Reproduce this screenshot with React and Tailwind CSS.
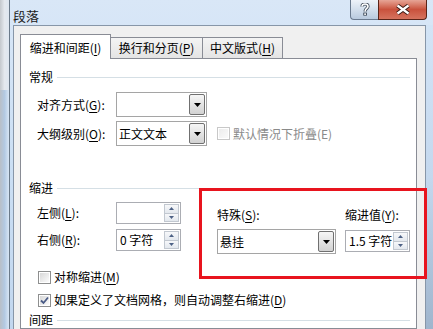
import React from "react";

const U = ({ children }) => (
  <span className="underline underline-offset-[2px] decoration-1">{children}</span>
);

const Arrow = () => (
  <svg width="7" height="4" viewBox="0 0 7 4">
    <path d="M0 0H7L3.5 4Z" fill="#000" />
  </svg>
);

const Combo = ({ text, w }) => (
  <div className={`flex h-[25px] ${w} items-stretch border border-[#a5a5a5] bg-white p-px`}>
    <div className="flex flex-1 items-center pl-[1px] text-black">{text}</div>
    <div className="flex w-[16px] items-center justify-center rounded-[2px] border border-[#707070] bg-gradient-to-b from-[#f6f6f6] to-[#d2d2d2]">
      <Arrow />
    </div>
  </div>
);

const Spin = ({ text }) => (
  <div className="flex h-[22px] w-[65px] items-stretch border border-[#abadb3] bg-white p-px">
    <div className="flex flex-1 items-center pl-[2px] text-black whitespace-nowrap overflow-hidden">{text}</div>
    <div className="flex w-[15px] flex-col">
      <div className="flex flex-1 items-center justify-center border border-[#c2c8d0] bg-gradient-to-b from-[#f7f8fa] to-[#e3e8ee]">
        <svg width="5" height="3" viewBox="0 0 5 3">
          <path d="M0 3H5L2.5 0Z" fill="#4d6185" />
        </svg>
      </div>
      <div className="flex flex-1 items-center justify-center border border-t-0 border-[#c2c8d0] bg-gradient-to-b from-[#f7f8fa] to-[#e3e8ee]">
        <svg width="5" height="3" viewBox="0 0 5 3">
          <path d="M0 0H5L2.5 3Z" fill="#4d6185" />
        </svg>
      </div>
    </div>
  </div>
);

const Check = ({ checked, disabled }) => (
  <div
    className={`h-[13px] w-[13px] shrink-0 border p-px bg-white ${
      disabled ? "border-[#c8c8c8]" : "border-[#8e8f8f]"
    }`}
  >
    <div
      className={`flex h-full w-full items-center justify-center ${
        disabled
          ? "bg-gradient-to-br from-[#ececec] to-[#fafafa]"
          : "bg-gradient-to-br from-[#d8d8d8] to-[#fbfbfb]"
      }`}
    >
      {checked && (
        <svg width="9" height="9" viewBox="0 0 9 9">
          <path d="M1 4.5L3.5 7L8 1.5" fill="none" stroke="#4a5b86" strokeWidth="1.8" />
        </svg>
      )}
    </div>
  </div>
);

const Header = ({ children, className = "" }) => (
  <div className={`flex items-center pl-[8px] pr-[6px] ${className}`}>
    <span className="text-black">{children}</span>
    <div className="ml-[4px] h-px flex-1 bg-[#d5dfe5]" />
  </div>
);

export default function App() {
  return (
    <div className="relative flex h-[329px] w-[433px] overflow-hidden bg-[#d9dee4] text-[12px] leading-[16px] font-['Noto_Sans_CJK_SC','Noto_Sans',sans-serif]">
      <div className="flex w-[9px] flex-col">
        <div className="h-[90px] bg-gradient-to-r from-[#c4c8cd] via-[#e4e8ee] to-[#dfe7f1]" />
        <div className="flex-1 bg-gradient-to-r from-[#b9bfc7] via-[#b3c9e2] to-[#d8e6f5]" />
      </div>

      <div className="flex flex-1 flex-col border-l border-[#6b7a8a] bg-gradient-to-b from-[#d9e7f7] via-[#cbdff4] to-[#c2d7ef]">
        <div className="flex h-[30px] items-start justify-between">
          <div className="pl-[3px] pt-[8px] text-[13px] leading-[16px] text-[#1b1b1b]">段落</div>
          <div className="mr-[6px] flex h-[20px]">
            <div className="flex w-[28px] items-center justify-center rounded-bl-[4px] border-b border-l border-[#6a7a8e] bg-gradient-to-b from-[#eef3f9] via-[#d3dfec] to-[#b9cade]">
              <svg width="10" height="13" viewBox="0 0 10 13">
                <path d="M2 3.6C2 1.9 3.3 1 5 1C6.8 1 8 2 8 3.5C8 5.3 5.2 5.6 5.2 7.8V8.4" fill="none" stroke="#3b4654" strokeWidth="3.2" />
                <rect x="3.3" y="9.6" width="3.6" height="3" fill="#3b4654" />
                <path d="M2 3.6C2 1.9 3.3 1 5 1C6.8 1 8 2 8 3.5C8 5.3 5.2 5.6 5.2 7.8V8.4" fill="none" stroke="#ffffff" strokeWidth="1.6" />
                <rect x="4.2" y="10.4" width="1.8" height="1.5" fill="#ffffff" />
              </svg>
            </div>
            <div className="flex w-[49px] items-center justify-center rounded-br-[4px] border-b border-l border-r border-[#5a2418] bg-gradient-to-b from-[#e6a596] via-[#c9523d] to-[#d6735e]">
              <svg width="16" height="11" viewBox="0 0 16 11">
                <path d="M2.5 1.5L13.5 9.5M13.5 1.5L2.5 9.5" stroke="#3a1a14" strokeWidth="4.2" />
                <path d="M2.5 1.5L13.5 9.5M13.5 1.5L2.5 9.5" stroke="#ffffff" strokeWidth="2.2" />
              </svg>
            </div>
          </div>
        </div>

        <div className="flex flex-1">
          <div className="w-[3px]" />
          <div className="flex flex-1 flex-col border-l border-t border-r border-[#8796a8] bg-[#f0f0f0] pl-[6px] pr-[8px] pt-[8px]">
            <div className="flex items-end">
              <div className="relative z-10 -mb-px flex h-[25px] w-[91px] items-center justify-center border-l border-r border-t border-[#898c95] bg-white pt-[1px] text-black">
                缩进和间距(<U>I</U>)
              </div>
              <div className="flex h-[21px] w-[92px] items-center justify-center border-r border-t border-[#898c95] bg-gradient-to-b from-[#f4f4f4] to-[#e4e4e4] text-black">
                换行和分页(<U>P</U>)
              </div>
              <div className="flex h-[21px] w-[80px] items-center justify-center border-r border-t border-[#898c95] bg-gradient-to-b from-[#f4f4f4] to-[#e4e4e4] text-black">
                中文版式(<U>H</U>)
              </div>
            </div>

            <div className="flex w-[397px] flex-1 flex-col border border-[#898c95] bg-white">
              <Header className="mt-[10px]">常规</Header>

              <div className="mt-[7px] flex items-center pl-[16px]">
                <div className="w-[79px] text-black">对齐方式(<U>G</U>):</div>
                <Combo text="" w="w-[91px]" />
              </div>
              <div className="mt-[4px] flex items-center pl-[16px]">
                <div className="w-[79px] text-black">大纲级别(<U>O</U>):</div>
                <Combo text="正文文本" w="w-[91px]" />
                <div className="ml-[10px] flex items-center">
                  <Check disabled />
                  <span className="ml-[3px] text-[#8a8a8a]">默认情况下折叠(E)</span>
                </div>
              </div>

              <Header className="mt-[34px]">缩进</Header>

              <div className="mt-[6px] flex items-start">
                <div className="flex flex-col pl-[16px]">
                  <div className="flex items-center">
                    <div className="w-[79px] text-black">左侧(<U>L</U>):</div>
                    <Spin text="" />
                  </div>
                  <div className="mt-[5px] flex items-center">
                    <div className="w-[79px] text-black">右侧(<U>R</U>):</div>
                    <Spin text="0 字符" />
                  </div>
                </div>
                <div className="ml-[36px] mt-[5px] flex flex-col">
                  <div className="text-black">特殊(<U>S</U>):</div>
                  <div className="mt-[6px]">
                    <Combo text="悬挂" w="w-[119px]" />
                  </div>
                </div>
                <div className="ml-[9px] mt-[5px] flex flex-col">
                  <div className="text-black">缩进值(<U>Y</U>):</div>
                  <div className="mt-[7px]">
                    <Spin text="1.5 字符" />
                  </div>
                </div>
              </div>

              <div className="mt-[15px] flex items-center pl-[17px]">
                <Check />
                <span className="ml-[3px] text-black">对称缩进(<U>M</U>)</span>
              </div>
              <div className="mt-[7px] flex items-center pl-[17px]">
                <Check checked />
                <span className="ml-[3px] text-black">如果定义了文档网格，则自动调整右缩进(<U>D</U>)</span>
              </div>

              <Header className="mt-[4px]">间距</Header>
            </div>
          </div>
          <div className="w-[7px] bg-gradient-to-b from-[#d3e4f6] via-[#c4d8ee] to-[#9fb5cd]" />
        </div>
      </div>

      <div className="pointer-events-none absolute left-[199px] top-[188px] h-[91px] w-[228px] border-[3px] border-[#e8141e]" />
    </div>
  );
}
